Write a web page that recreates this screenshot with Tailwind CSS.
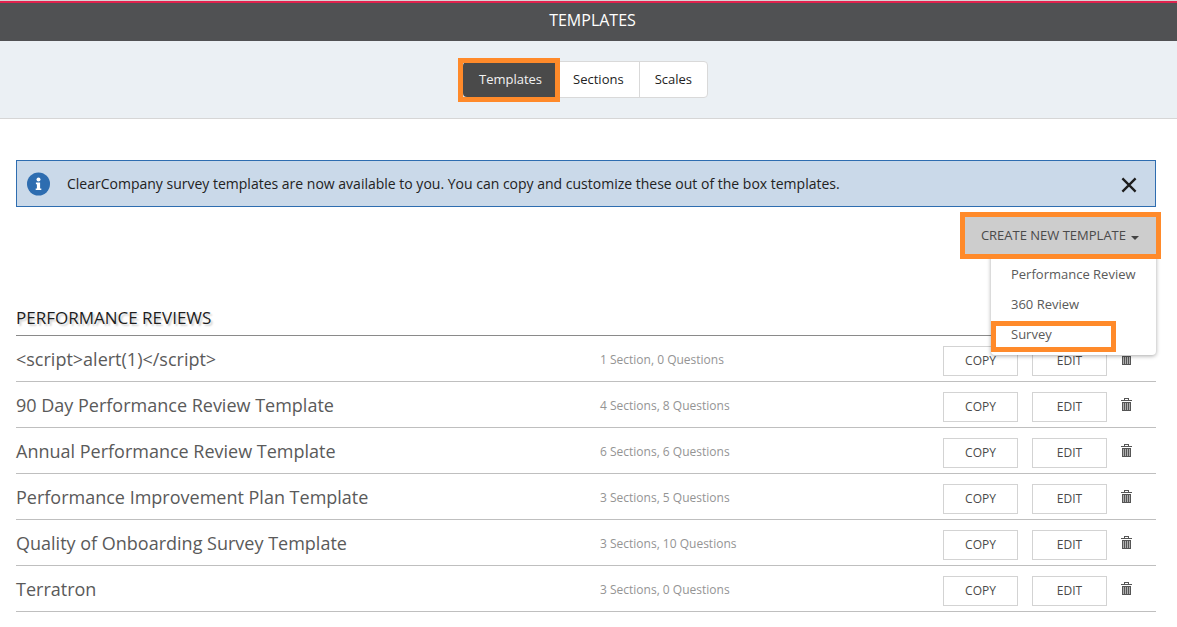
<!DOCTYPE html>
<html lang="en">
<head>
<meta charset="utf-8">
<meta name="viewport" content="width=device-width, initial-scale=1">
<title>Templates</title>
<script src="https://cdn.jsdelivr.net/npm/@tailwindcss/browser@4"></script>
</head>
<body class="bg-white font-['Open_Sans','Noto_Sans',sans-serif] text-[#4a4a4a]">
<svg class="hidden" aria-hidden="true">
  <symbol id="trash" viewBox="0 0 11 13">
    <path d="M3 0h5v2h3v1H0V2h3zM4 1v1h3V1z" fill="#555" fill-rule="evenodd"/>
    <path d="M1 4h9v9H1z" fill="#555"/>
    <path d="M2 5h1v7H2zM4 5h1v7H4zM6 5h1v7H6zM8 5h1v7H8z" fill="#b0b0b0"/>
  </symbol>
</svg>

<header class="border-t border-[#d5d5d5]">
  <div class="border-t-2 border-[#e0234e] bg-[#505153] pl-2">
    <h1 class="h-[38px] text-center text-base leading-[34px] text-white">TEMPLATES</h1>
  </div>
</header>

<nav class="flex justify-center border-b border-[#d6d6d6] bg-[#ebf0f4] pt-5 pr-[23px] pb-5 pl-4 text-[13px] text-[#222]">
  <div class="flex h-[37px] rounded border border-[#d9d9d9] bg-white">
    <div class="relative flex">
      <button type="button" class="rounded-l bg-[#4a4a4a] pr-[15px] pl-4 text-[#f2f2f2]">Templates</button>
      <span class="pointer-events-none absolute -top-1 -right-[3px] -bottom-[5px] -left-[5px] border-5 border-[#ff8a2a]"></span>
    </div>
    <button type="button" class="pr-[15px] pl-4">Sections</button>
    <button type="button" class="border-l border-[#d9d9d9] px-[15px]">Scales</button>
  </div>
</nav>

<main class="pt-[41px] pr-[21px] pl-4">
  <div class="flex h-[47px] items-center border border-[#2e6db0] bg-[#cad9e9] pr-[18px] pl-2.5 text-sm text-[#222]">
    <svg class="mr-4 size-6 shrink-0" viewBox="0 0 24 24" aria-hidden="true">
      <circle cx="11.5" cy="12" r="11.5" fill="#2e6db0"/>
      <circle cx="11.5" cy="7.5" r="2" fill="#fff"/>
      <path d="M8.9 10.6h4.2v5.8h1.2V18H8.7v-1.6h1.2v-4.2h-1z" fill="#fff"/>
    </svg>
    <p class="grow">ClearCompany survey templates are now available to you. You can copy and customize these out of the box templates.</p>
    <button type="button" aria-label="Dismiss" class="pt-0.5">
      <svg class="size-4" viewBox="0 0 16 16" fill="none" stroke="#1d1d1d" stroke-width="2.3"><path d="M1.4 1.4l13.2 13.2M14.6 1.4L1.4 14.6"/></svg>
    </button>
  </div>

  <div class="flex justify-end pt-2.5">
    <div class="relative">
      <button type="button" aria-haspopup="true" aria-expanded="true" class="relative z-20 flex h-[37px] items-center bg-[#cdcdcd] pr-[17px] pl-4 text-[13px]">
        CREATE NEW TEMPLATE
        <svg class="mt-1 ml-[5px] h-1 w-2" viewBox="0 0 8 4" aria-hidden="true"><path d="M0 0h8L4 4z" fill="#444"/></svg>
        <span class="pointer-events-none absolute -inset-[5px] border-5 border-[#ff8a2a]"></span>
      </button>
      <ul class="absolute top-full right-0 z-10 w-[165px] rounded-b bg-white pt-[5px] pb-[6px] text-[13px] leading-[30px] text-[#5a5a5a] shadow-[0_1px_4px_rgba(0,0,0,0.35)]">
        <li><a href="#" class="block pl-5">Performance Review</a></li>
        <li><a href="#" class="block pl-5">360 Review</a></li>
        <li class="relative"><a href="#" class="block pl-5">Survey</a>
          <span class="pointer-events-none absolute top-0.5 left-0 h-[31px] w-[125px] border-5 border-[#ff8a2a]"></span>
        </li>
      </ul>
    </div>
  </div>

  <h2 class="mt-[46px] h-9 border-b border-[#8a8a8a] text-[17px] leading-9 text-[#1d1d1d] [text-shadow:2px_2px_2px_rgba(0,0,0,0.2)]">PERFORMANCE REVIEWS</h2>

  <table class="w-full table-fixed border-separate border-spacing-0" aria-label="Performance reviews">
    <colgroup><col><col class="w-[343px]"><col class="w-[213px]"></colgroup>
    <tbody id="rows"></tbody>
  </table>
</main>

<template id="row">
  <tr class="h-[46px] [&>td]:border-b [&>td]:border-[#bfbfbf]">
    <td class="text-lg text-[#5a5a5a]"></td>
    <td class="pt-[3px] text-xs text-[#949494]"></td>
    <td>
      <div class="flex items-center gap-[14px] pt-[5px]">
        <button type="button" class="h-[30px] w-[75px] border border-[#d3d3d3] bg-white text-xs">COPY</button>
        <button type="button" class="h-[30px] w-[75px] border border-[#d3d3d3] bg-white text-xs">EDIT</button>
        <button type="button" aria-label="Delete" class="-mt-1.5"><svg class="h-[13px] w-[11px]"><use href="#trash"/></svg></button>
      </div>
    </td>
  </tr>
</template>
<script>
  const rows = [
    ['<script>alert(1)<\/script>', '1 Section, 0 Questions'],
    ['90 Day Performance Review Template', '4 Sections, 8 Questions'],
    ['Annual Performance Review Template', '6 Sections, 6 Questions'],
    ['Performance Improvement Plan Template', '3 Sections, 5 Questions'],
    ['Quality of Onboarding Survey Template', '3 Sections, 10 Questions'],
    ['Terratron', '3 Sections, 0 Questions'],
  ];
  const tpl = document.getElementById('row');
  for (const [name, meta] of rows) {
    const r = tpl.content.cloneNode(true);
    const cells = r.querySelectorAll('td');
    cells[0].textContent = name;
    cells[1].textContent = meta;
    document.getElementById('rows').append(r);
  }
</script>
</body>
</html>
